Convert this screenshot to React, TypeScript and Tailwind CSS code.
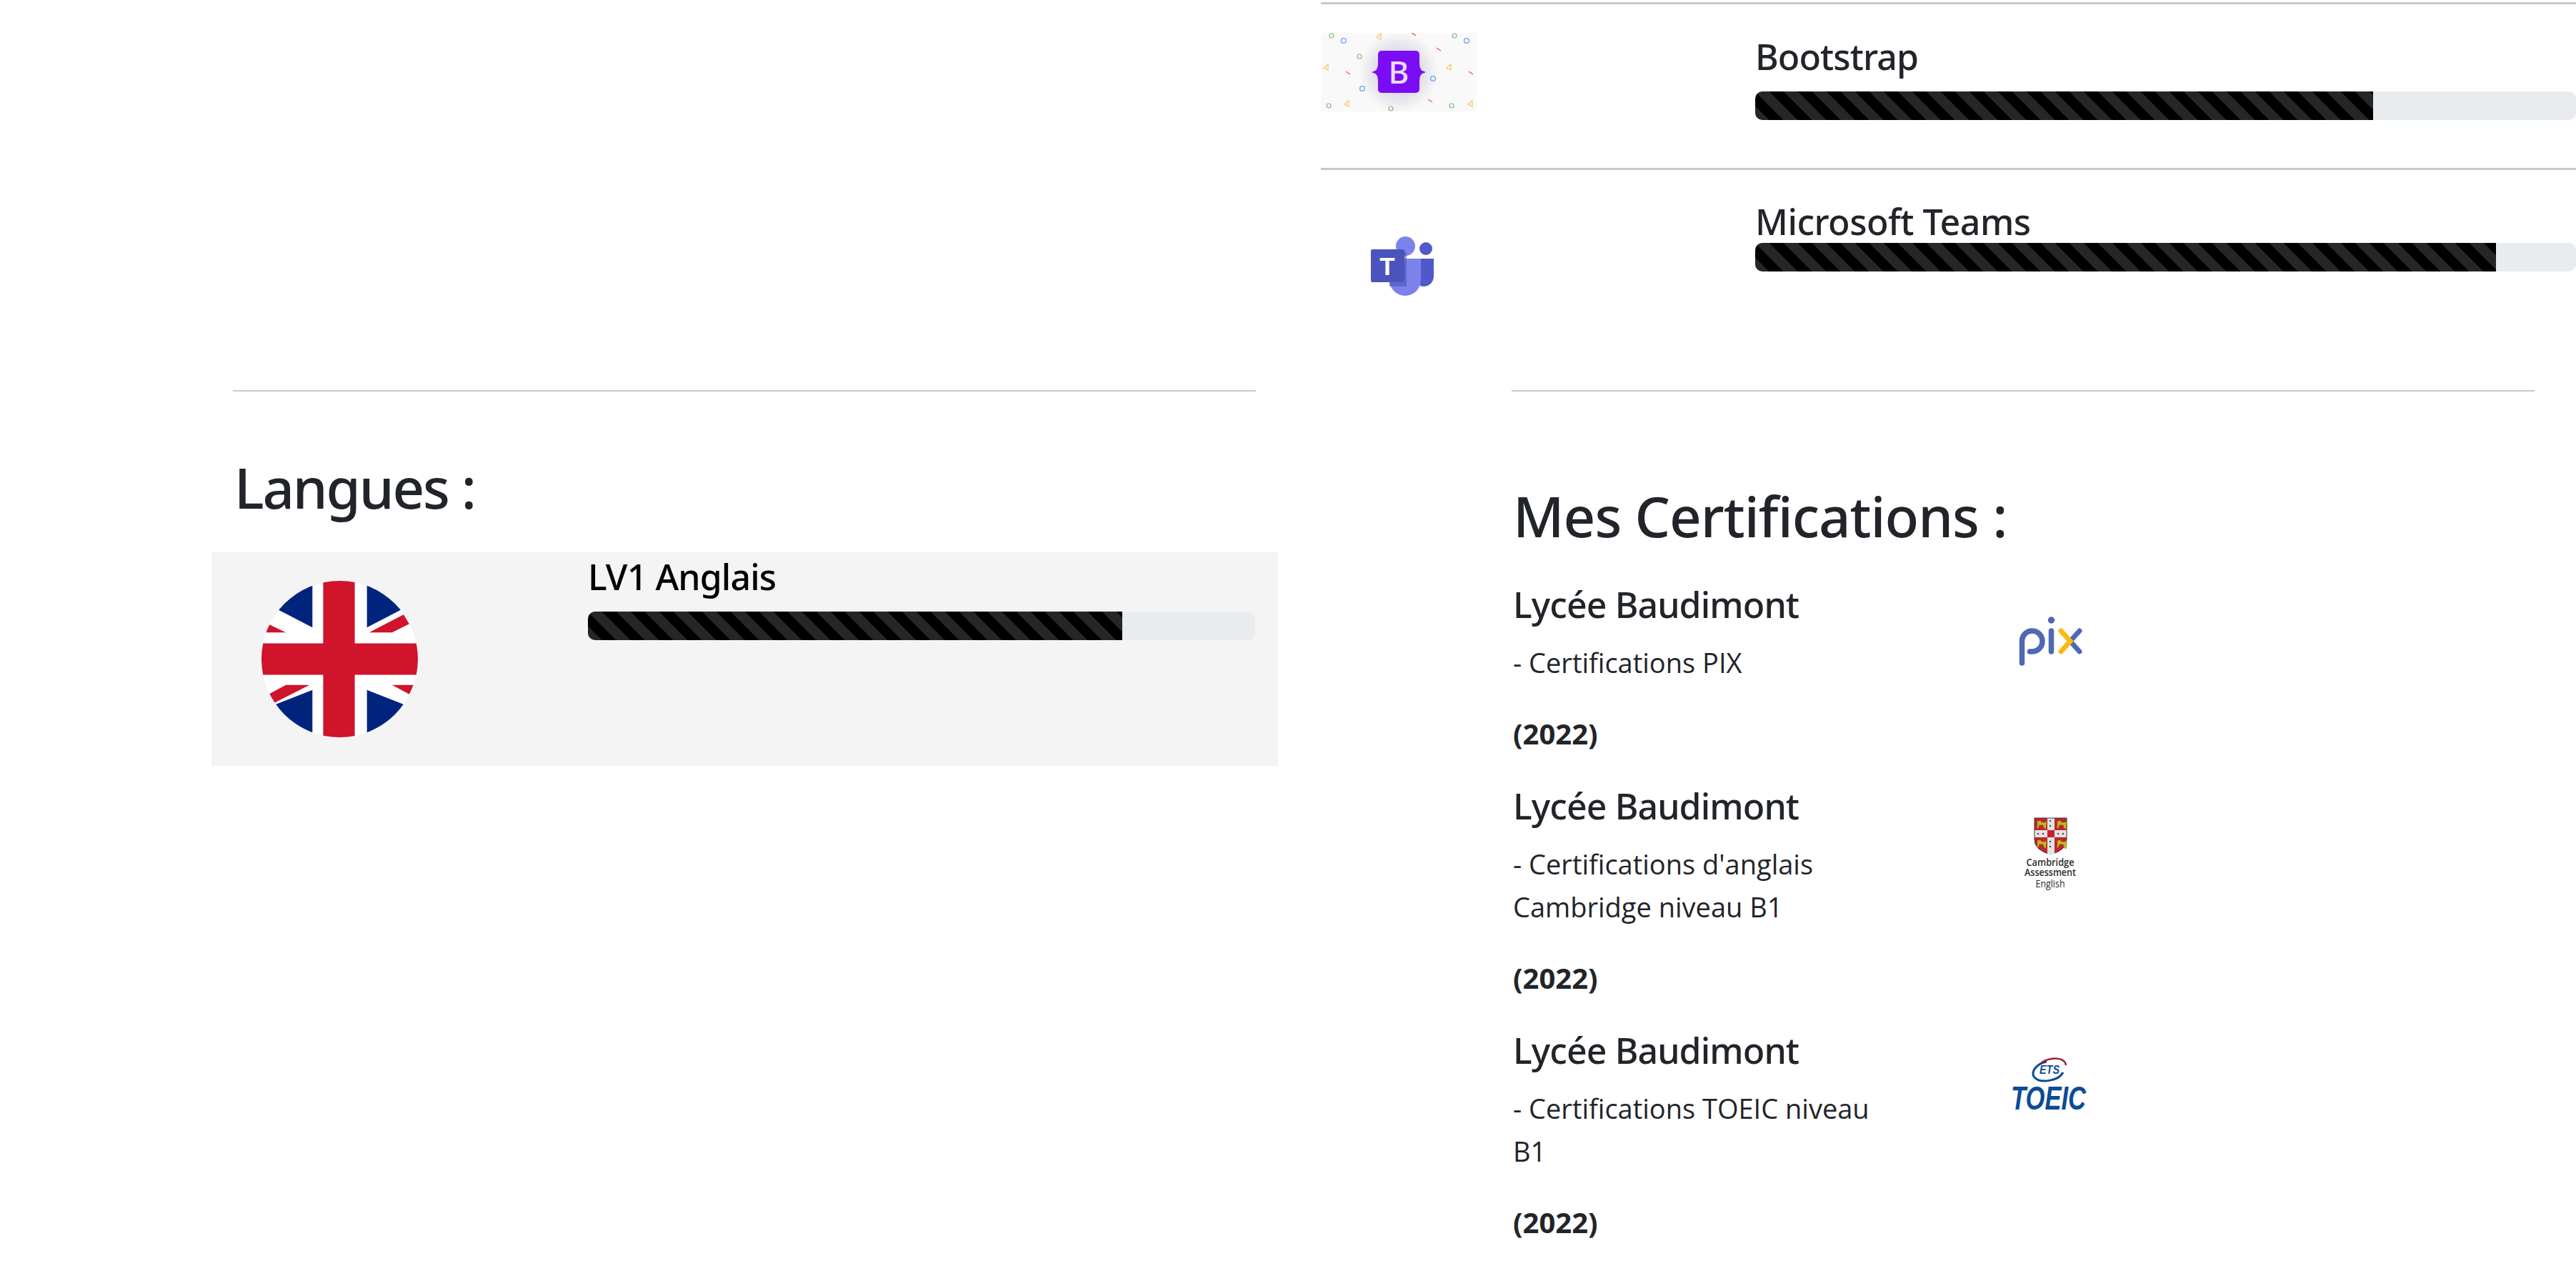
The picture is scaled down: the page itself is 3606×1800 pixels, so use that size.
const FONT = "font-['Noto_Sans','Open_Sans',sans-serif]";

const STRIPES =
  "bg-black bg-[linear-gradient(45deg,rgba(255,255,255,.15)_25%,transparent_25%,transparent_50%,rgba(255,255,255,.15)_50%,rgba(255,255,255,.15)_75%,transparent_75%,transparent)] bg-[length:40px_40px]";

const SKILL_TITLE = "text-[50px] leading-[62px] font-medium tracking-[-0.9px]";
const BODY_TEXT = "font-['Open_Sans',sans-serif] text-[38px] leading-[60px]";

function Bar({ width }: { width: number }) {
  return (
    <div className="h-[40px] w-full overflow-hidden rounded-[10px] bg-[#e9ecef]">
      <div className={`h-full ${STRIPES}`} style={{ width }} />
    </div>
  );
}

function BootstrapLogo() {
  const green = [[15, 4], [187, 4], [54, 33], [11, 102], [98, 106], [183, 102]];
  const blue = [[32, 11], [204, 11], [157, 64], [58, 78]];
  const yellow = [[81, 5], [7, 48], [179, 48], [36, 99], [209, 99]];
  const red = [[130, 2], [165, 23], [38, 56], [210, 56], [153, 95]];
  return (
    <svg width="218" height="110" viewBox="0 0 218 110" className="block">
      <defs>
        <radialGradient id="bsGlow">
          <stop offset="0.45" stopColor="#d9d6e2" />
          <stop offset="1" stopColor="#f9f9f9" />
        </radialGradient>
      </defs>
      <rect width="218" height="110" fill="#f9f9f9" />
      <circle cx="109" cy="55" r="56" fill="url(#bsGlow)" />
      {green.map(([x, y]) => (
        <circle key={`g${x}`} cx={x} cy={y} r="3" fill="none" stroke="#7dbb7d" strokeWidth="1.2" />
      ))}
      {blue.map(([x, y]) => (
        <circle key={`b${x}`} cx={x} cy={y} r="3.4" fill="none" stroke="#6a9df5" strokeWidth="1.3" />
      ))}
      {yellow.map(([x, y]) => (
        <path key={`y${x}`} d={`M${x + 3} ${y - 4}L${x - 3} ${y + 1}L${x + 3} ${y + 4}Z`} fill="none" stroke="#f5c860" strokeWidth="1.2" />
      ))}
      {red.map(([x, y]) => (
        <path key={`r${x}`} d={`M${x - 3} ${y - 2}L${x + 3} ${y + 2}`} stroke="#e0566b" strokeWidth="1.4" />
      ))}
      <path
        d="M85 25h48a5 5 0 0 1 5 5v12q0 9 4 11l5 2-5 2q-4 2-4 11v11a5 5 0 0 1-5 5H85a5 5 0 0 1-5-5V68q0-9-4-11l-5-2 5-2q4-2 4-11V30a5 5 0 0 1 5-5z"
        fill="#7a0df5"
      />
      <text x="109" y="71" textAnchor="middle" fontFamily="Noto Sans" fontSize="44" fontWeight="500" fill="#eadcff">
        B
      </text>
    </svg>
  );
}

function TeamsLogo() {
  return (
    <svg width="90" height="84" viewBox="0 0 90 84" className="block">
      <circle cx="77" cy="17" r="9" fill="#5059c9" />
      <path d="M60 31h28v24a14 14 0 0 1-19 14z" fill="#5059c9" />
      <circle cx="48.5" cy="13.5" r="13.5" fill="#7b83eb" />
      <path d="M26 31h44v30a22 22 0 0 1-44 0z" fill="#7b83eb" />
      <rect x="26" y="22" width="24" height="48" fill="#4a50ab" opacity="0.55" />
      <rect x="0" y="18" width="47" height="46" rx="2" fill="#4b53bc" />
      <text x="23" y="54" textAnchor="middle" fontFamily="Liberation Sans" fontSize="35" fontWeight="700" fill="#ffffff">
        T
      </text>
    </svg>
  );
}

function FlagLogo() {
  return (
    <svg width="219" height="219" viewBox="0 0 218 218" className="block rounded-full">
      <rect width="218" height="218" fill="#ffffff" />
      <path d="M71 65V0H0v28zM147 65V0h71v28zM71 152v66H0v-38zM147 152v66h71v-38z" fill="#00247d" />
      <path d="M9 60l25 12H6zM198 47l8 13-24 12h-32zM34 145h33l-49 25-8-12zM182 145h30l-6 13z" fill="#cf142b" />
      <path d="M86 0h44v87h88v44h-88v87H86v-87H0V87h86z" fill="#cf142b" />
    </svg>
  );
}

function PixLogo() {
  return (
    <svg width="120" height="120" viewBox="0 0 120 120" className="block">
      <path d="M20.5 73V42a14 14 0 0 1 14-14 14 14 0 0 1 0 29h-3" fill="none" stroke="#4f68b5" strokeWidth="7.5" strokeLinecap="round" />
      <circle cx="61.5" cy="13" r="4.7" fill="#4f68b5" />
      <path d="M61.5 28v29" stroke="#4f68b5" strokeWidth="7.5" strokeLinecap="round" />
      <path d="M101 28L88 42.5 101 57" fill="none" stroke="#4f68b5" strokeWidth="7" strokeLinecap="round" />
      <path d="M75 28l13 14.5L75 57" fill="none" stroke="#fbb810" strokeWidth="7" strokeLinecap="round" />
    </svg>
  );
}

function CambridgeLogo() {
  const lions = [[40, 10], [68, 10], [40, 37], [68, 37]];
  const dots = [[60, 12], [60, 19], [43, 30], [50, 30], [71, 30], [78, 30], [60, 41], [60, 48]];
  return (
    <svg width="120" height="120" viewBox="0 0 120 120" className="block">
      <path d="M38 8h45v30q0 15-22.500 21Q38 53 38 38z" fill="#c8202f" stroke="#333333" strokeWidth="1" />
      <path d="M56 8.500h10v50l-5.500 1.500-4.500-1.500z" fill="#e4e4e4" />
      <rect x="38.500" y="25" width="44" height="10" fill="#e4e4e4" />
      <rect x="56" y="25" width="10" height="10" fill="#c8202f" />
      {lions.map(([x, y]) => (
        <g key={`${x}${y}`}>
          <path d={`M${x + 1} ${y + 3}l5-2 2 3h5l1-3 1 4-1 9-3-2-1-4h-5l-2 5-2-1 1-6z`} fill="#c9b41f" stroke="#5a4a12" strokeWidth="0.5" />
        </g>
      ))}
      {dots.map(([x, y]) => (
        <circle key={`${x}${y}`} cx={x} cy={y} r="1.200" fill="#444444" />
      ))}
      <g fontFamily="Open Sans" textAnchor="middle" fill="#2b2b2b">
        <text x="60" y="75" fontSize="15" fontWeight="600" textLength="67" lengthAdjust="spacingAndGlyphs">Cambridge</text>
        <text x="60" y="89" fontSize="15" fontWeight="600" textLength="72" lengthAdjust="spacingAndGlyphs">Assessment</text>
        <text x="60" y="105" fontSize="15" textLength="41" lengthAdjust="spacingAndGlyphs">English</text>
      </g>
    </svg>
  );
}

function ToeicLogo() {
  return (
    <svg width="160" height="120" viewBox="0 0 160 120" className="block">
      <path d="M55 7C40 10 32 22 38 29C46 38 72 34 78 22" fill="none" stroke="#0d4a97" strokeWidth="3" />
      <path d="M47 9C58 1 80-1 82 12" fill="none" stroke="#9d1c2e" strokeWidth="2.500" />
      <text x="59" y="24" textAnchor="middle" fontFamily="Liberation Sans" fontStyle="italic" fontWeight="700" fontSize="17" textLength="28" lengthAdjust="spacingAndGlyphs" fill="#0d4a97">
        ETS
      </text>
      <text x="5" y="74" fontFamily="Liberation Sans" fontStyle="italic" fontWeight="700" fontSize="46" textLength="105" lengthAdjust="spacingAndGlyphs" fill="#0d4a97">
        TOEIC
      </text>
    </svg>
  );
}

function Certification({
  lines,
  logo,
}: {
  lines: string[];
  logo: React.ReactNode;
}) {
  return (
    <div className="grid grid-cols-[694px_160px]">
      <div className="text-[#212529]">
        <h5 className={`mb-[20px] pl-[2px] ${SKILL_TITLE}`}>Lycée Baudimont</h5>
        <p className={`mb-[40px] pl-[2px] ${BODY_TEXT}`}>
          {lines.map((line) => (
            <span key={line} className="block">
              {line}
            </span>
          ))}
        </p>
        <p className="mb-[40px] pl-[2px] font-['Open_Sans',sans-serif] text-[40px] leading-[60px] font-bold">(2022)</p>
      </div>
      <div className="mt-[40px] h-[120px]">{logo}</div>
    </div>
  );
}

export default function App() {
  return (
    <div className={`grid h-[1800px] w-[3606px] grid-cols-2 overflow-hidden bg-white ${FONT}`}>
      <div className="pt-[546px]">
        <div className="ml-[326px] h-[2px] w-[1432px] bg-[#c8c8c8]" />
        <h2 className="mt-[86px] mb-[43px] ml-[328px] text-[78px] leading-[96px] font-medium tracking-[-2.2px] text-[#212529]">
          Langues :
        </h2>
        <div className="ml-[296px] grid h-[299px] w-[1493px] grid-cols-[527px_934px] bg-[#f4f4f4]">
          <div className="pt-[40px] pl-[70px]">
            <FlagLogo />
          </div>
          <div className="pt-[3px]">
            <div className={`mb-[18px] text-black ${SKILL_TITLE}`}>LV1 Anglais</div>
            <Bar width={748} />
          </div>
        </div>
      </div>

      <div className="pt-[3px]">
        <div className="ml-[46px] grid h-[232px] grid-cols-[608px_1149px] border-t-[3px] border-[#c8c8c8]">
          <div className="pt-[40px]">
            <BootstrapLogo />
          </div>
          <div className="pt-[42px]">
            <div className={`mb-[18px] text-[#212529] ${SKILL_TITLE}`}>Bootstrap</div>
            <Bar width={865} />
          </div>
        </div>
        <div className="ml-[46px] grid h-[311px] grid-cols-[608px_1149px] border-t-[3px] border-[#c8c8c8]">
          <div className="pt-[93px] pl-[70px]">
            <TeamsLogo />
          </div>
          <div className="pt-[43px]">
            <div className="text-[50px] leading-[59px] font-medium tracking-[-0.5px] text-[#212529]">Microsoft Teams</div>
            <Bar width={1037} />
          </div>
        </div>

        <div className="ml-[313px] w-[1432px]">
          <div className="h-[2px] bg-[#c8c8c8]" />
          <h2 className="mt-[120px] mb-[39px] pl-[2px] text-[78px] leading-[108px] font-medium tracking-[-1px] text-[#212529]">
            Mes Certifications :
          </h2>
          <Certification lines={["- Certifications PIX"]} logo={<PixLogo />} />
          <Certification lines={["- Certifications d'anglais", "Cambridge niveau B1"]} logo={<CambridgeLogo />} />
          <Certification lines={["- Certifications TOEIC niveau", "B1"]} logo={<ToeicLogo />} />
        </div>
      </div>
    </div>
  );
}
